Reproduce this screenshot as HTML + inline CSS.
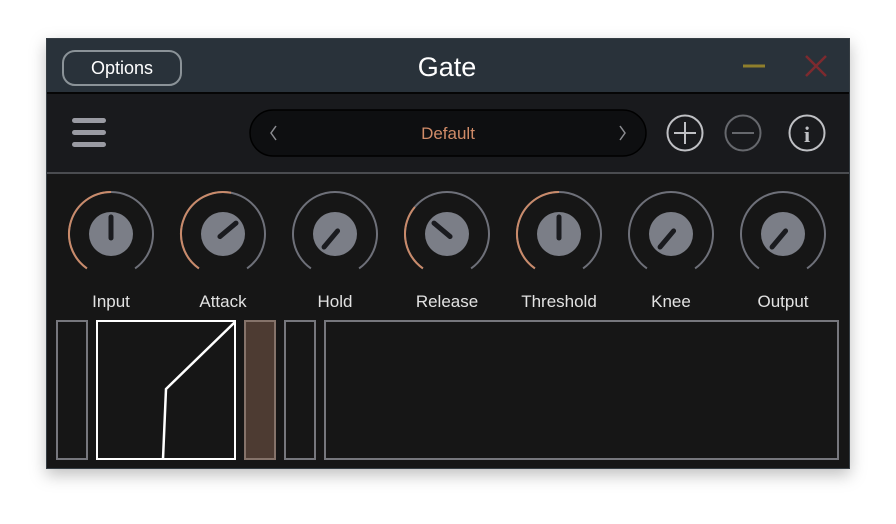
<!DOCTYPE html>
<html><head><meta charset="utf-8"><style>
html,body{margin:0;padding:0;background:#fff;width:896px;height:524px;overflow:hidden}
text{font-family:"Liberation Sans",sans-serif}
</style></head><body>
<svg width="896" height="524" viewBox="0 0 896 524" xmlns="http://www.w3.org/2000/svg">
<defs><filter id="sh" x="-10%" y="-10%" width="120%" height="130%"><feDropShadow dx="0" dy="6" stdDeviation="8" flood-color="#000" flood-opacity="0.25"/></filter></defs>
<rect x="46" y="38" width="804" height="431" fill="#151619" filter="url(#sh)"/>
<rect x="46" y="38" width="804" height="55" fill="#29323a"/>
<rect x="46" y="92" width="804" height="2" fill="#050505"/>
<rect x="46" y="94" width="804" height="78" fill="#191a1d"/>
<rect x="46" y="172" width="804" height="2" fill="#4a4c50"/>
<rect x="46.5" y="38.5" width="803" height="430" fill="none" stroke="#353d43"/>
<rect x="63" y="51" width="118" height="34" rx="12" fill="none" stroke="#8b9398" stroke-width="2"/>
<text x="122" y="74" font-size="18" fill="#fff" text-anchor="middle">Options</text>
<text x="447" y="76" font-size="27" fill="#fff" text-anchor="middle">Gate</text>
<line x1="743" y1="66" x2="765" y2="66" stroke="#8f7f2c" stroke-width="3"/>
<path d="M806 56L826 76M826 56L806 76" stroke="#7c2a2f" stroke-width="2.5"/>
<g fill="#9a9ba3"><rect x="72" y="118" width="34" height="5" rx="2.5"/><rect x="72" y="130" width="34" height="5" rx="2.5"/><rect x="72" y="142" width="34" height="5" rx="2.5"/></g>
<rect x="250" y="110" width="396" height="46" rx="23" fill="#0e0f11" stroke="#000" stroke-width="1.5"/>
<path d="M276 126l-5 7 5 7M620 126l5 7-5 7" fill="none" stroke="#8a8b90" stroke-width="1.5"/>
<text x="448" y="139" font-size="17" fill="#d08b68" text-anchor="middle">Default</text>
<g fill="none" stroke-width="2"><circle cx="685" cy="133" r="17.5" stroke="#bfc0c4"/><path d="M674 133h22M685 122v22" stroke="#bfc0c4"/>
<circle cx="743" cy="133" r="17.5" stroke="#66686d"/><path d="M732 133h22" stroke="#66686d"/>
<circle cx="807" cy="133" r="17.5" stroke="#bfc0c4"/></g>
<text x="807" y="142" font-size="22" fill="#bfc0c4" text-anchor="middle" style="font-family:'Liberation Serif',serif;font-weight:bold">i</text>
<g id="knobs"></g>
<g font-size="17" fill="#e2e2e2" text-anchor="middle">
<text x="111" y="307">Input</text><text x="223" y="307">Attack</text><text x="335" y="307">Hold</text><text x="447" y="307">Release</text><text x="559" y="307">Threshold</text><text x="671" y="307">Knee</text><text x="783" y="307">Output</text></g>
<g fill="none" stroke-width="2">
<rect x="57" y="321" width="30" height="138" stroke="#76777d"/>
<rect x="97" y="321" width="138" height="138" stroke="#fff"/>
<rect x="245" y="321" width="30" height="138" stroke="#85736a" fill="#4d3b32"/>
<rect x="285" y="321" width="30" height="138" stroke="#76777d"/>
<rect x="325" y="321" width="513" height="138" stroke="#76777d"/>
<path d="M163 459L166 389L235 322" stroke="#fff" stroke-width="2.5"/>
</g>
<script>
const g=document.getElementById('knobs');const ns='http://www.w3.org/2000/svg';
const K=[[111,0,0],[223,11,50],[335,null,-140],[447,-50,-50],[559,0,0],[671,null,-140],[783,null,-140]];
function pt(cx,cy,r,a){a=a*Math.PI/180;return [cx+r*Math.sin(a),cy-r*Math.cos(a)];}
function arc(cx,cy,r,a0,a1,col){const p=pt(cx,cy,r,a0),q=pt(cx,cy,r,a1);const l=(a1-a0)>180?1:0;const e=document.createElementNS(ns,'path');e.setAttribute('d',`M${p[0]} ${p[1]}A${r} ${r} 0 ${l} 1 ${q[0]} ${q[1]}`);e.setAttribute('fill','none');e.setAttribute('stroke',col);e.setAttribute('stroke-width','2');g.appendChild(e);}
for(const [cx,o,pa] of K){const cy=234;arc(cx,cy,42,-145,145,'#6e7079');if(o!==null)arc(cx,cy,42,-145,o,'#c98a6a');
const c=document.createElementNS(ns,'circle');c.setAttribute('cx',cx);c.setAttribute('cy',cy);c.setAttribute('r',22);c.setAttribute('fill','#7b7e87');g.appendChild(c);
const a=pt(cx,cy,-4,pa),b=pt(cx,cy,17,pa);const l=document.createElementNS(ns,'line');l.setAttribute('x1',a[0]);l.setAttribute('y1',a[1]);l.setAttribute('x2',b[0]);l.setAttribute('y2',b[1]);l.setAttribute('stroke','#1a1b1f');l.setAttribute('stroke-width','5');l.setAttribute('stroke-linecap','round');g.appendChild(l);}
</script>
</svg>
</body></html>
